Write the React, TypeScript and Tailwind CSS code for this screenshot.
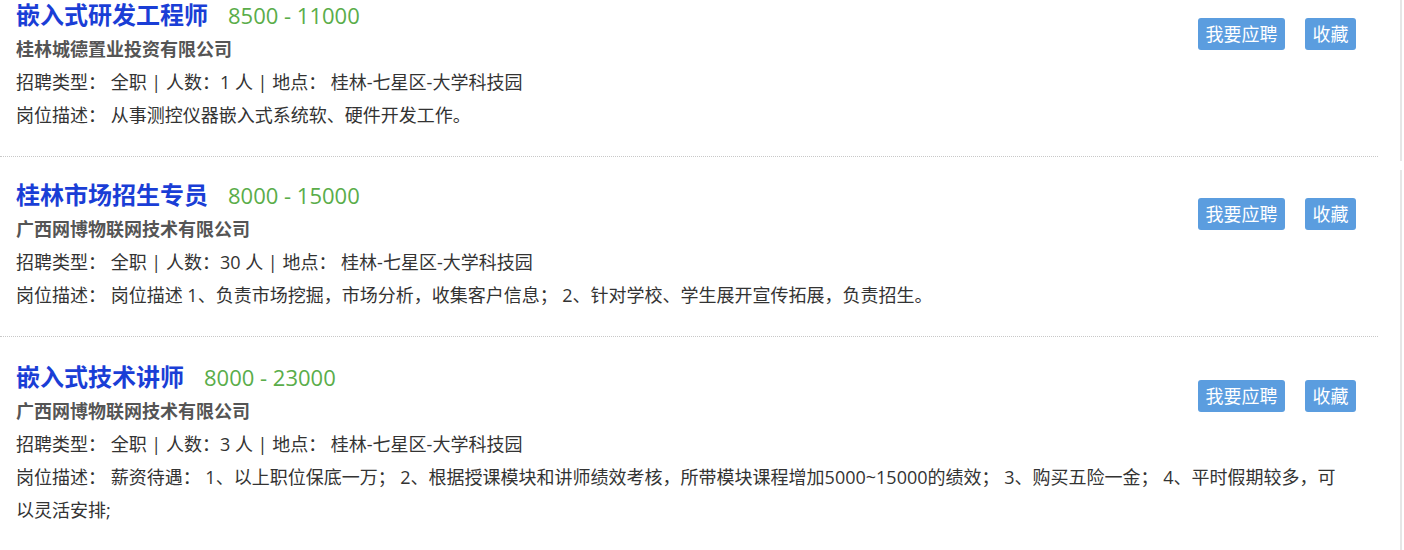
import React from 'react'

type Job = {
  title: string
  salary: string
  company: string
  count: string
  desc: string
}

const jobs: Job[] = [
  {
    title: '嵌入式研发工程师',
    salary: '8500 - 11000',
    company: '桂林城德置业投资有限公司',
    count: '1',
    desc: '从事测控仪器嵌入式系统软、硬件开发工作。',
  },
  {
    title: '桂林市场招生专员',
    salary: '8000 - 15000',
    company: '广西网博物联网技术有限公司',
    count: '30',
    desc: '岗位描述 1、负责市场挖掘，市场分析，收集客户信息； 2、针对学校、学生展开宣传拓展，负责招生。',
  },
  {
    title: '嵌入式技术讲师',
    salary: '8000 - 23000',
    company: '广西网博物联网技术有限公司',
    count: '3',
    desc: '薪资待遇： 1、以上职位保底一万； 2、根据授课模块和讲师绩效考核，所带模块课程增加5000~15000的绩效； 3、购买五险一金； 4、平时假期较多，可以灵活安排;',
  },
]

const JobCard = ({ job, first }: { job: Job; first?: boolean }) => {
  return (
    <div
      className={`w-[1378px] border-b border-dotted border-[#c8c8c8] pl-4 pr-[22px] pb-6 ${
        first ? 'pt-0' : 'pt-6'
      }`}
    >
      <div className="float-right mt-[18px] flex gap-5">
        <button className="h-8 rounded-[3px] bg-[#5b9ddf] px-[7.5px] text-[18px] leading-8 text-white">
          我要应聘
        </button>
        <button className="h-8 rounded-[3px] bg-[#5b9ddf] px-[7.5px] text-[18px] leading-8 text-white">
          收藏
        </button>
      </div>
      <div className="flex h-[30px] items-baseline leading-[30px]">
        <span className="text-[24px] font-bold text-[#1a3ed6]">{job.title}</span>
        <span className="ml-5 text-[22px] text-[#5aad4a]">{job.salary}</span>
      </div>
      <div className="mt-[3px] text-[18px] font-bold leading-[33px] text-[#555]">{job.company}</div>
      <div className="text-[18px] leading-[33px] text-[#333]">
        招聘类型： 全职 | 人数：{job.count} 人 | 地点： 桂林-七星区-大学科技园
      </div>
      <div className="pr-[4px] text-[18px] leading-[33px] text-[#333]">岗位描述： {job.desc}</div>
    </div>
  )
}

const App = () => {
  return (
    <div className="min-h-[550px] bg-white font-['Open_Sans','Noto_Sans_CJK_SC',sans-serif]">
      <div className="w-[1402px] border-r-2 border-[#e6e6e6] pb-1">
        <JobCard job={jobs[0]} first />
      </div>
      <div className="mt-[9px] min-h-[380px] w-[1402px] border-r-2 border-[#e6e6e6]">
        <div className="pt-[10px]">
          <JobCard job={jobs[1]} first />
        </div>
        <div className="pt-px">
          <JobCard job={jobs[2]} />
        </div>
      </div>
    </div>
  )
}

export default App
